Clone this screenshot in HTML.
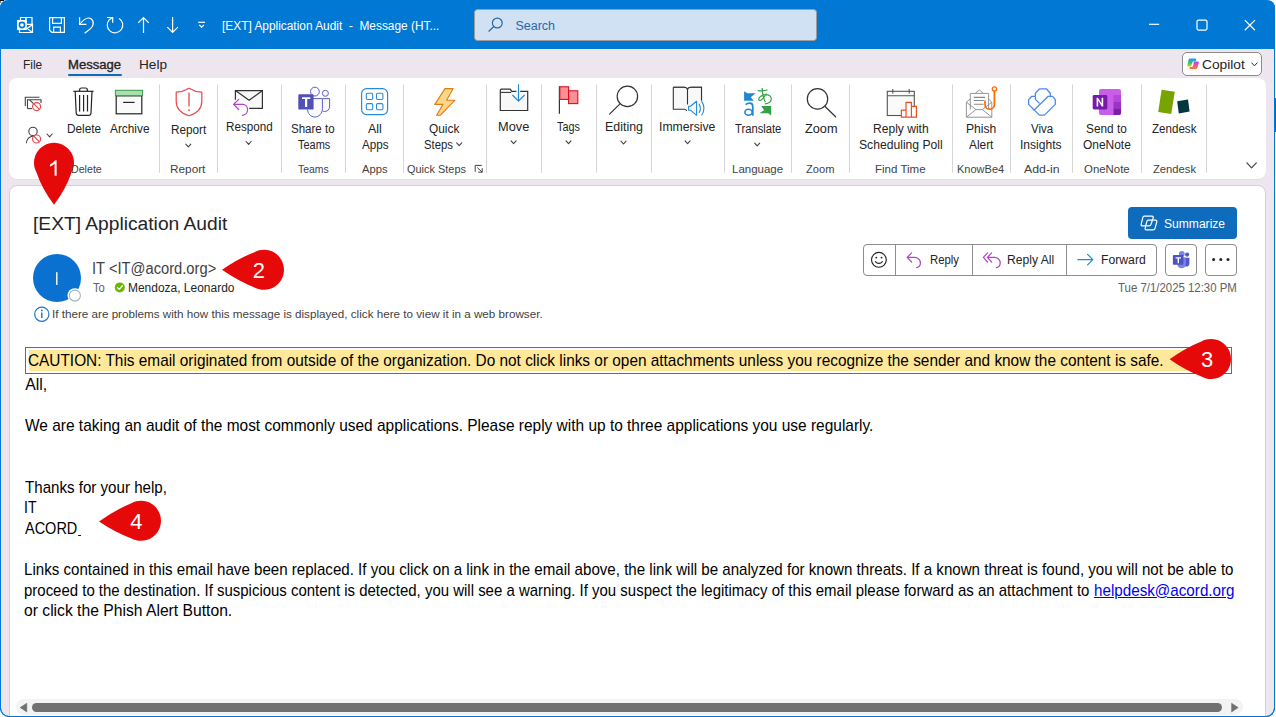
<!DOCTYPE html>
<html><head><meta charset="utf-8"><title>Outlook</title><style>
html,body{margin:0;padding:0;width:1276px;height:717px;overflow:hidden;background:#ffffff;font-family:"Liberation Sans",sans-serif}
.t{position:absolute;white-space:pre;line-height:1;transform-origin:0 0}
.a{position:absolute;box-sizing:border-box}
svg{position:absolute;overflow:visible}
</style></head><body>
<div class="a" style="left:0;top:0;width:1275px;height:717px;background:#eee6ee;border:1px solid #0078d4;border-top:none;border-radius:8px 8px 9px 9px;"></div>
<div class="a" style="left:0;top:0;width:1275px;height:49px;background:#0078d4;border-radius:8px 8px 0 0;"></div>
<!-- search -->
<div class="a" style="left:474px;top:9px;width:343px;height:32px;background:#cfe1f3;border:1px solid #9d9c9e;border-radius:3.5px;"></div>
<!-- copilot btn -->
<div class="a" style="left:1182px;top:52px;width:80px;height:24px;background:#fff;border:1px solid #8a8a8a;border-radius:5px;"></div>
<!-- ribbon card -->
<div class="a" style="left:9px;top:78px;width:1257px;height:101px;background:#fff;border-radius:8px;box-shadow:0 0.5px 0.5px rgba(0,0,0,0.06);"></div>
<!-- message card -->
<div class="a" style="left:9px;top:185px;width:1257px;height:540px;background:#fff;border:1px solid #d4d0d4;border-radius:8px 8px 0 0;"></div>
<!-- menu underline -->
<div class="a" style="left:68.3px;top:73.6px;width:53.4px;height:2.5px;background:#0f6cbd;border-radius:1.5px;"></div>
<!-- summarize -->
<div class="a" style="left:1128px;top:207px;width:109px;height:32px;background:#0f6cbd;border-radius:4px;"></div>
<!-- action buttons -->
<div class="a" style="left:863px;top:244px;width:294px;height:32px;background:#fff;border:1px solid #8d8d8d;border-radius:4px;"></div>
<div class="a" style="left:895px;top:245px;width:1px;height:30px;background:#8d8d8d;"></div>
<div class="a" style="left:972px;top:245px;width:1px;height:30px;background:#8d8d8d;"></div>
<div class="a" style="left:1066px;top:245px;width:1px;height:30px;background:#8d8d8d;"></div>
<div class="a" style="left:1165px;top:244px;width:32px;height:32px;background:#fff;border:1px solid #8d8d8d;border-radius:4px;"></div>
<div class="a" style="left:1205px;top:244px;width:32px;height:32px;background:#fff;border:1px solid #8d8d8d;border-radius:4px;"></div>
<!-- avatar -->
<div class="a" style="left:33px;top:254px;width:48px;height:48px;background:#0b71d0;border-radius:50%;"></div>
<!-- caution -->
<div class="a" style="left:25px;top:347px;width:1207px;height:27px;border:1px solid #9c6500;"></div>
<div class="a" style="left:29px;top:350px;width:1199px;height:21px;background:#ffe899;"></div>
<!-- scrollbar -->
<div class="a" style="left:16px;top:699px;width:1227px;height:16px;background:#f3f3f3;border-radius:8px;"></div>
<div class="a" style="left:32px;top:703px;width:1190px;height:9px;background:#707070;border-radius:5px;"></div>
<svg style="left:0;top:0" width="1276" height="717" viewBox="0 0 1276 717">
<g fill="none" stroke="#fff" stroke-width="1.2">
 <!-- outlook -->
 <path d="M20.5 20 V17.5 H32 V24"/>
 <path d="M25.9 17.5 V23.5" stroke-width="1.6"/>
 <path d="M19.5 30 V32.5 H32.5 V23.6 M26.6 24.3 H32 M32 25 L27.2 28.4 L31.6 32"/>
 <rect x="17" y="20" width="9.8" height="10" fill="#fff" stroke="none"/>
 <circle cx="22" cy="25" r="2.6" stroke="#0078d4" stroke-width="1.6"/>
 <!-- save -->
 <path d="M49.6 17.6 H64.4 V32.4 H51.8 L49.6 30.2 Z"/>
 <path d="M52.6 17.6 V23.4 H61.4 V17.6"/>
 <path d="M53.6 32.4 V27.2 H60.4 V32.4"/>
 <!-- undo -->
 <path d="M79.6 17.2 V24.4 H86.4"/>
 <path d="M80 24 C84 19 88 16.8 91 18.8 C94.8 21.5 93.5 26.6 89.5 29.6 L84.6 33.2"/>
 <!-- redo -->
 <path d="M119.1 18.4 A7.8 7.8 0 1 1 109.2 19.8 L112.6 17.5"/>
 <path d="M107 17.5 H112.7 V22.8"/>
 <!-- up -->
 <path d="M143.5 17.5 V33 M138.2 22.8 L143.5 17.5 L148.8 22.8"/>
 <!-- down -->
 <path d="M172.6 17 V32.5 M167.3 27.2 L172.6 32.5 L177.9 27.2"/>
 <!-- customize -->
 <path d="M198.2 22.3 H205"/>
 <path d="M199.2 24.8 L201.6 27.2 L204 24.8"/>
 <!-- window controls -->
 <path d="M1149 24.3 H1159.2"/>
 <rect x="1197" y="20.1" width="10" height="10" rx="1.5"/>
 <path d="M1244.8 20.1 L1255 30.2 M1255 20.1 L1244.8 30.2"/>
</g>
<g fill="none" stroke="#2a67a8" stroke-width="1.2">
 <circle cx="497.3" cy="23" r="4.9"/>
 <path d="M493.8 26.5 L488.6 31.5"/>
</g>
<line x1="159.5" y1="84.5" x2="159.5" y2="172.8" stroke="#d6d6d6" stroke-width="1"/><line x1="217.5" y1="84.5" x2="217.5" y2="172.8" stroke="#d6d6d6" stroke-width="1"/><line x1="281.5" y1="84.5" x2="281.5" y2="172.8" stroke="#d6d6d6" stroke-width="1"/><line x1="345.5" y1="84.5" x2="345.5" y2="172.8" stroke="#d6d6d6" stroke-width="1"/><line x1="403.5" y1="84.5" x2="403.5" y2="172.8" stroke="#d6d6d6" stroke-width="1"/><line x1="486.5" y1="84.5" x2="486.5" y2="172.8" stroke="#d6d6d6" stroke-width="1"/><line x1="541.5" y1="84.5" x2="541.5" y2="172.8" stroke="#d6d6d6" stroke-width="1"/><line x1="596.5" y1="84.5" x2="596.5" y2="172.8" stroke="#d6d6d6" stroke-width="1"/><line x1="651.5" y1="84.5" x2="651.5" y2="172.8" stroke="#d6d6d6" stroke-width="1"/><line x1="724.5" y1="84.5" x2="724.5" y2="172.8" stroke="#d6d6d6" stroke-width="1"/><line x1="791.5" y1="84.5" x2="791.5" y2="172.8" stroke="#d6d6d6" stroke-width="1"/><line x1="849.5" y1="84.5" x2="849.5" y2="172.8" stroke="#d6d6d6" stroke-width="1"/><line x1="952.5" y1="84.5" x2="952.5" y2="172.8" stroke="#d6d6d6" stroke-width="1"/><line x1="1010.5" y1="84.5" x2="1010.5" y2="172.8" stroke="#d6d6d6" stroke-width="1"/><line x1="1072.5" y1="84.5" x2="1072.5" y2="172.8" stroke="#d6d6d6" stroke-width="1"/><line x1="1141.5" y1="84.5" x2="1141.5" y2="172.8" stroke="#d6d6d6" stroke-width="1"/><line x1="1206.5" y1="84.5" x2="1206.5" y2="172.8" stroke="#d6d6d6" stroke-width="1"/>
<g fill="none" stroke="#424242" stroke-width="1.1">
 <!-- ignore -->
 <path d="M25.3 106 V97.3 H39.5"/>
 <path d="M27.5 108.6 V99.7 H41 V103"/>
 <path d="M27.5 108.6 H32"/>
 <path d="M29.5 99.9 L33.5 103.6"/>
 <!-- person block -->
 <circle cx="33" cy="131.4" r="4.2"/>
 <path d="M26.3 143.2 C26.8 139.2 29.5 136.4 33.5 136"/>
</g>
<g fill="#fff" stroke="#e5484d" stroke-width="1.2">
 <circle cx="36.6" cy="106.6" r="4"/>
 <path d="M33.8 103.8 L39.4 109.4"/>
 <circle cx="36.6" cy="139" r="4"/>
 <path d="M33.8 136.2 L39.4 141.8"/>
</g>
<path d="M47.00 134.00 L49.60 136.80 L52.20 134.00" fill="none" stroke="#424242" stroke-width="1.1" stroke-linecap="round" stroke-linejoin="round"/>
<g fill="none" stroke="#242424" stroke-width="1.2">
 <!-- trash -->
 <path d="M73.3 91.3 H93.6"/>
 <path d="M79.6 91.2 V90 C79.6 88.6 80.4 88 81.6 88 H85.4 C86.6 88 87.4 88.6 87.4 90 V91.2"/>
 <path d="M75.2 91.5 L76.2 113 C76.3 114.6 77.2 115.4 78.6 115.4 H88.6 C90 115.4 90.9 114.6 91 113 L92 91.5"/>
 <path d="M79.6 95 V111.6 M83.6 95 V111.6 M87.5 95 V111.6"/>
 <!-- archive -->
 <rect x="116.2" y="95.8" width="25.6" height="18" fill="#fafafa"/>
 <path d="M123.2 102.4 H134.6"/>
</g>
<rect x="115.4" y="90.3" width="27.2" height="5.4" fill="#a8dfb0" stroke="#3c9a48" stroke-width="1"/>
<!-- shield -->
<path d="M189 88.2 C185 90.6 180.6 92 176.2 92.2 V101.5 C176.2 108.6 181.4 113.4 189 115.8 C196.6 113.4 201.8 108.6 201.8 101.5 V92.2 C197.4 92 193 90.6 189 88.2 Z" fill="#fff" stroke="#e5484d" stroke-width="1.2"/>
<path d="M189 92.6 V106.4" stroke="#e5484d" stroke-width="1.3"/>
<circle cx="189" cy="110.2" r="0.9" fill="#e5484d"/>
<!-- envelope respond -->
<rect x="235.4" y="90.6" width="27" height="17.7" fill="#f8f8f8" stroke="none"/>
<path d="M235.4 99.8 V90.6 H262.4 V108.3 H249.2" fill="none" stroke="#333" stroke-width="1.2"/>
<path d="M235.8 90.8 L249.1 100.2 L262.2 90.8" fill="none" stroke="#333" stroke-width="1.2"/>
<path d="M238.7 99.3 L233.6 104.4 L238.7 109.5 M233.8 104.4 H242.6 C245.6 104.4 247.6 106.8 247.6 109.8 C247.6 112.8 245.4 115.2 242.4 115.4" fill="none" stroke="#b146c2" stroke-width="1.2" stroke-linecap="round" stroke-linejoin="round"/>
<path d="M185.80 144.10 L188.30 146.90 L190.80 144.10" fill="none" stroke="#424242" stroke-width="1.1" stroke-linecap="round" stroke-linejoin="round"/><path d="M246.10 141.50 L248.60 144.30 L251.10 141.50" fill="none" stroke="#424242" stroke-width="1.1" stroke-linecap="round" stroke-linejoin="round"/><path d="M456.70 142.95 L459.20 145.65 L461.70 142.95" fill="none" stroke="#424242" stroke-width="1.1" stroke-linecap="round" stroke-linejoin="round"/><path d="M511.10 140.90 L513.60 143.70 L516.10 140.90" fill="none" stroke="#424242" stroke-width="1.1" stroke-linecap="round" stroke-linejoin="round"/><path d="M566.00 140.90 L568.50 143.70 L571.00 140.90" fill="none" stroke="#424242" stroke-width="1.1" stroke-linecap="round" stroke-linejoin="round"/><path d="M621.00 141.20 L623.50 144.00 L626.00 141.20" fill="none" stroke="#424242" stroke-width="1.1" stroke-linecap="round" stroke-linejoin="round"/><path d="M685.10 140.90 L687.60 143.70 L690.10 140.90" fill="none" stroke="#424242" stroke-width="1.1" stroke-linecap="round" stroke-linejoin="round"/><path d="M754.70 143.10 L757.20 145.90 L759.70 143.10" fill="none" stroke="#424242" stroke-width="1.1" stroke-linecap="round" stroke-linejoin="round"/>
<!-- teams -->
<g stroke="#5b5fc7" stroke-width="1" fill="#fafafa">
 <path d="M322.6 98.6 H329.6 V106.2 C329.6 109.4 327.6 111.5 324.8 111.5 C323.6 111.5 322.8 111.2 322.4 110.9"/>
 <circle cx="325.4" cy="93.3" r="3"/>
 <path d="M310 98.6 H322.4 V108.8 C322.4 113.4 319 117 314.9 117 C310.8 117 307.6 113.6 307.6 109.6"/>
 <circle cx="314.9" cy="91.6" r="4.4"/>
</g>
<rect x="298.3" y="94.3" width="15.3" height="15.3" rx="1.2" fill="#4f52b2"/>
<path d="M302 97.3 H310.3 V99.1 H307.2 V107 H305 V99.1 H302 Z" fill="#fff"/>
<!-- all apps -->
<rect x="361.6" y="88.6" width="26" height="26" rx="5" fill="none" stroke="#2b8ad6" stroke-width="1.2"/>
<g fill="none" stroke="#2b8ad6" stroke-width="1.1">
 <rect x="366.3" y="93.3" width="6.4" height="6.2" rx="1.2"/>
 <rect x="376.5" y="93.3" width="6.4" height="6.2" rx="1.2"/>
 <rect x="366.3" y="103.6" width="6.4" height="6.2" rx="1.2"/>
 <rect x="376.5" y="103.6" width="6.4" height="6.2" rx="1.2"/>
</g>
<!-- lightning -->
<path d="M445 88.6 L453.2 88.6 L446.6 100.2 L455 100.2 L440.4 115.2 L436.6 115.2 L443 104.4 L434.8 104.4 Z" fill="#f9d88a" stroke="#e07b10" stroke-width="1.1" stroke-linejoin="round"/>
<!-- move -->
<rect x="500.3" y="91.4" width="27.4" height="19.1" fill="#f8f8f8"/>
<path d="M516.4 91.4 H511.8 L510.2 89.2 H501.3 C500.7 89.2 500.3 89.6 500.3 90.2 V110.5 H527.7 V91.4 H520.2" fill="none" stroke="#333" stroke-width="1.2"/>
<path d="M500.3 92.4 H511.2" fill="none" stroke="#333" stroke-width="1.1"/>
<path d="M518.5 84.2 V101.2 M512.4 95 L518.5 101.2 L524.6 95" fill="none" stroke="#1e8ad6" stroke-width="1.2" stroke-linejoin="round"/>
<!-- flag -->
<path d="M559.4 86.3 V113.7" stroke="#333" stroke-width="1.2"/>
<rect x="559.8" y="86.8" width="8.8" height="12.6" fill="#ff8f96" stroke="#d0131d" stroke-width="1.1"/>
<rect x="568.6" y="90.8" width="9.2" height="12.8" fill="#ff8f96" stroke="#d0131d" stroke-width="1.1"/>

<!-- editing magnifier -->
<circle cx="627.4" cy="96.4" r="10.2" fill="none" stroke="#333" stroke-width="1.2"/>
<path d="M620.2 103.6 L609.6 114.2" stroke="#333" stroke-width="1.2" stroke-linecap="round"/>
<!-- immersive -->
<path d="M673.3 87.3 H684.2 C685.8 87.3 687 88 687.5 89.6 C688 88 689.2 87.3 690.8 87.3 H701.5 V100.4" fill="none" stroke="#333" stroke-width="1.1"/>
<rect x="673.8" y="87.8" width="27.2" height="21" fill="#f8f8f8"/>
<path d="M673.3 87.3 H684.2 C685.8 87.3 687 88 687.5 89.6 C688 88 689.2 87.3 690.8 87.3 H701.5 V100.4 M673.3 87.3 V109.3 H684.4 C685.4 109.3 686.2 109.8 686.8 110.9 M687.5 89.6 V104.5" fill="none" stroke="#333" stroke-width="1.1"/>
<path d="M688.6 106.3 H690.5 L696.6 101.3 V115.3 L690.5 110.2 H688.6 Z" fill="#fafafa" stroke="#1e8ad6" stroke-width="1.1" stroke-linejoin="round"/>
<path d="M699.2 104.2 C700.6 106.6 700.6 110 699.2 112.4 M701.8 101.6 C704.4 105.6 704.4 111 701.8 115" fill="none" stroke="#1e8ad6" stroke-width="1.1" stroke-linecap="round"/>
<!-- translate -->
<path d="M744.1 91.2 L747.4 93.3 H755.6 L750.8 97.3 L753.8 100.8 H744.1 Z" fill="#1e87d4"/>
<path d="M745.6 104.6 C746.8 103.6 748.4 103.2 749.8 103.2 C751.8 103.2 752.8 104.4 752.8 106.6 V115.8" fill="none" stroke="#1e87d4" stroke-width="1.7"/>
<ellipse cx="748.5" cy="112.2" rx="3.6" ry="3" fill="none" stroke="#1e87d4" stroke-width="1.6"/>
<path d="M758.2 90.6 C761.5 91.2 765 90.6 767.2 90 M762.2 88.4 C762.4 92.6 763.4 98.6 765.2 101.8 M766.2 94 C763.6 98.2 760.4 101.4 759 100.2 C757.6 98.8 760.8 94.6 765.8 94.6 C769.4 94.6 771.4 96.6 771.2 99.2 C771 101.8 768.4 103.4 765.2 103.8" fill="none" stroke="#34a044" stroke-width="1.2" stroke-linecap="round"/>
<path d="M771.2 106.1 V115.6 L768.2 113.3 H759.4 L764.2 110.2 L761.2 106.1 Z" fill="#34a044"/>
<!-- zoom magnifier -->
<circle cx="817.5" cy="98.9" r="10.2" fill="none" stroke="#333" stroke-width="1.2"/>
<path d="M824.8 106.2 L835.6 116.8" stroke="#333" stroke-width="1.2" stroke-linecap="round"/>
<!-- calendar poll -->
<rect x="887.3" y="91.3" width="27" height="24.2" fill="#fafafa" stroke="#555" stroke-width="1.1"/>
<path d="M887.3 95.8 H914.3 M892.8 89 V93.4 M909.2 89 V93.4" fill="none" stroke="#555" stroke-width="1.1"/>
<path d="M901.4 117.2 V110.2 H906 V102.3 H911.4 V106.3 H916.4 V117.2 Z M906 110.2 V117.2 M911.4 106.3 V117.2" fill="#fff" stroke="#e8501c" stroke-width="1.2"/>
<!-- phish alert -->
<g fill="none" stroke="#8a8a8a" stroke-width="0.9">
 <path d="M966.4 102.2 V117.2 H991.8 V102.2 L988.6 99 M966.4 102.2 L970.2 99"/>
 <path d="M966.6 117 L975.9 109.6 H982.3 L991.6 117 M966.4 102.2 L975.9 109.6 M991.8 102.2 L982.3 109.6"/>
 <path d="M970.3 109.4 V93.4 H988.6 V109.4 M975.3 93.4 L979.3 89.9 L983.3 93.4"/>
 <path d="M973.8 97.4 H985.2 M973.8 100.5 H983.8 M973.8 104.3 H983.6" stroke-width="1.1"/>
</g>
<path d="M994.4 91 V104.4 C994.4 107.4 992.2 109.2 989.6 109.2 C986.8 109.2 985 107 985 104.4 V100.6" fill="none" stroke="#ff6a00" stroke-width="1.7"/>
<circle cx="994.4" cy="88.9" r="2.1" fill="#fff" stroke="#ff6a00" stroke-width="1.3"/>
<!-- viva -->
<g fill="none" stroke="#4a8af5" stroke-width="1.3" stroke-linejoin="round">
 <path d="M1035.4 96.3 V93.2 L1039.6 88.8 H1046.3 L1050.3 93.2 V96.3"/>
 <path d="M1035.4 96.3 H1031.8 L1028.6 99.6 V104.4 L1039.4 115.1 H1044.5 L1055.3 104.4 V99.6 L1052.6 96.3 H1048.2 L1034.4 109.8 H1032.6"/>
 <path d="M1035.4 96.3 L1035.6 99.6 L1039.6 103.4"/>
</g>
<!-- onenote -->
<rect x="1099" y="89" width="22" height="26" rx="2" fill="#c95ee8"/>
<rect x="1113.5" y="95" width="7.5" height="6.8" fill="#b548d8"/>
<rect x="1113.5" y="101.8" width="7.5" height="6.8" fill="#9b34c4"/>
<path d="M1113.5 108.6 H1121 V113 A2 2 0 0 1 1119 115 H1113.5 Z" fill="#7c1fa8"/>
<rect x="1092.7" y="94.9" width="14.6" height="14.5" rx="1.4" fill="#7719aa"/>
<path d="M1096.6 106.4 V97.8 H1098 L1101.6 103.6 V97.8 H1103.2 V106.4 H1101.8 L1098.2 100.6 V106.4 Z" fill="#fff"/>
<!-- zendesk -->
<path d="M1161.6 89.8 L1174.8 91.8 L1171.2 114 L1158.2 112 Z" fill="#78a300"/>
<path d="M1177.2 101.2 L1188 99.4 L1189.6 111.6 L1178.8 113.4 Z" fill="#03363d"/>
<!-- quick steps launcher -->
<path d="M475.2 171.8 V165.4 H481.8" fill="none" stroke="#424242" stroke-width="1"/>
<path d="M477.4 167.6 L482.2 172.2 M482.2 168.2 V172.2 H478.2" fill="none" stroke="#424242" stroke-width="1"/>
<path d="M1246.90 162.90 L1251.60 167.90 L1256.30 162.90" fill="none" stroke="#424242" stroke-width="1.2" stroke-linecap="round" stroke-linejoin="round"/>
<!-- green check -->
<circle cx="119.8" cy="287.4" r="5" fill="#6bb700"/>
<path d="M117.4 287.6 L119.2 289.4 L122.4 285.8" fill="none" stroke="#fff" stroke-width="1.3" stroke-linecap="round" stroke-linejoin="round"/>
<!-- info -->
<circle cx="41.8" cy="314.2" r="7.1" fill="none" stroke="#1c74c4" stroke-width="1.2"/>
<path d="M41.8 312.6 V318" stroke="#1c74c4" stroke-width="1.4"/>
<circle cx="41.8" cy="310.4" r="0.9" fill="#1c74c4"/>
<!-- summarize icon -->
<g fill="none" stroke="#fff" stroke-width="1.2" stroke-linejoin="round">
 <path d="M1144.2 216.2 H1152 Q1153.6 216.2 1153.2 217.8 L1151 224.4 Q1150.6 225.8 1149 225.8 H1142.2 Q1140.8 225.8 1141.2 224.2 L1142.8 217.6 Q1143.2 216.2 1144.2 216.2 Z"/>
 <path d="M1148 220.2 H1155.6 Q1157.2 220.2 1156.8 221.8 L1155 228.4 Q1154.6 229.8 1153 229.8 H1146.2 Q1144.8 229.8 1145.2 228.2 L1146.8 221.6 Q1147.2 220.2 1148 220.2 Z"/>
</g>
<!-- emoji -->
<circle cx="878.9" cy="259.8" r="7.4" fill="none" stroke="#242424" stroke-width="1.1"/>
<circle cx="876.3" cy="257.6" r="0.95" fill="#242424"/>
<circle cx="881.5" cy="257.6" r="0.95" fill="#242424"/>
<path d="M875.4 261.6 C877.2 264 880.6 264 882.4 261.6" fill="none" stroke="#242424" stroke-width="1.1" stroke-linecap="round"/>
<!-- reply -->
<path d="M911.6 252.8 L907.2 257.4 L911.6 262 M907.6 257.4 H914.6 C917.8 257.4 920.4 259.8 920.4 263 C920.4 265.6 918.6 267.2 916.6 267.6" fill="none" stroke="#b146c2" stroke-width="1.2" stroke-linecap="round" stroke-linejoin="round"/>
<!-- reply all -->
<path d="M987.6 252.8 L983.4 257.4 L987.6 262 M991.6 252.8 L987.4 257.4 L991.6 262 M987.8 257.4 H994.4 C997.6 257.4 1000.2 259.8 1000.2 263 C1000.2 265.6 998.4 267.2 996.4 267.6" fill="none" stroke="#b146c2" stroke-width="1.2" stroke-linecap="round" stroke-linejoin="round"/>
<!-- forward -->
<path d="M1077.8 259.6 H1092.6 M1087.6 254.4 L1092.8 259.6 L1087.6 264.8" fill="none" stroke="#1e8ad6" stroke-width="1.2" stroke-linecap="round" stroke-linejoin="round"/>
<!-- teams small -->
<circle cx="1187.1" cy="254.6" r="2.1" fill="#5059c9"/>
<path d="M1183.4 257.8 H1189.4 V263.4 C1189.4 265.4 1188 266.6 1186.4 266.6 C1184.8 266.6 1183.4 265.4 1183.4 263.4 Z" fill="#5059c9"/>
<circle cx="1181.8" cy="253.8" r="2.9" fill="#7b83eb"/>
<path d="M1177.4 257.6 H1185.8 V264.4 C1185.8 266.8 1183.9 268.2 1181.6 268.2 C1179.3 268.2 1177.4 266.8 1177.4 264.4 Z" fill="#7b83eb"/>
<rect x="1172.9" y="255" width="10.6" height="9.8" rx="0.8" fill="#4b53bc"/>
<path d="M1175.6 257.2 H1181 V258.6 H1179 V263.2 H1177.6 V258.6 H1175.6 Z" fill="#fff"/>
<!-- more dots -->
<circle cx="1213.6" cy="259.6" r="1.5" fill="#242424"/>
<circle cx="1220.8" cy="259.6" r="1.5" fill="#242424"/>
<circle cx="1228" cy="259.6" r="1.5" fill="#242424"/>
<!-- copilot -->
<defs>
 <linearGradient id="cpg1" x1="0" y1="0" x2="0" y2="1"><stop offset="0" stop-color="#1a9cf0"/><stop offset="0.55" stop-color="#3cc070"/><stop offset="1" stop-color="#e8d010"/></linearGradient>
 <linearGradient id="cpg2" x1="0" y1="0" x2="0" y2="1"><stop offset="0" stop-color="#a050f0"/><stop offset="0.5" stop-color="#f04ea0"/><stop offset="1" stop-color="#ff7a30"/></linearGradient>
</defs>
<path d="M1189.6 58.6 H1195.2 Q1196.6 58.6 1196.2 60 L1195.9 61.2 H1194 Q1192.8 61.2 1192.4 62.4 L1191 66.6 H1188.2 Q1187 66.6 1187.3 65.4 L1188.6 59.8 Q1188.9 58.6 1189.6 58.6 Z" fill="url(#cpg1)"/>
<path d="M1193.8 61.6 H1197.8 Q1199.2 61.6 1198.8 63 L1197.4 67.8 Q1197 69 1195.8 69 H1190.2 Q1189 69 1189.4 67.8 L1189.8 66.9 H1191.8 Q1192.8 66.9 1193.2 65.8 Z" fill="url(#cpg2)"/>
<path d="M1251.70 62.95 L1254.40 65.85 L1257.10 62.95" fill="none" stroke="#242424" stroke-width="1.0" stroke-linecap="round" stroke-linejoin="round"/><path d="M54.00 204.80 Q65.79 189.36 71.59 172.32 A20 20 0 1 0 36.41 172.32 Q42.21 189.36 54.00 204.80 Z" fill="#e60909"/><path d="M222.00 269.80 Q239.04 258.01 254.48 252.21 A20 20 0 1 1 254.48 287.39 Q239.04 281.59 222.00 269.80 Z" fill="#e60909"/><path d="M1169.60 359.30 Q1186.27 347.39 1201.34 341.49 A20 20 0 1 1 1201.34 376.51 Q1186.27 370.91 1169.60 359.30 Z" fill="#e60909"/><path d="M99.00 521.50 Q116.04 509.36 131.48 503.21 A20 20 0 1 1 131.48 538.39 Q116.04 532.94 99.00 521.50 Z" fill="#e60909"/>
<path d="M20.2 707.6 L26.8 703.2 V712 Z" fill="#707070" stroke="#707070" stroke-width="0.6" stroke-linejoin="round"/>
<path d="M1238.2 707.6 L1231.6 703.2 V712 Z" fill="#707070" stroke="#707070" stroke-width="0.6" stroke-linejoin="round"/>
<rect x="78" y="535" width="3" height="1" fill="#0000ee"/>
<path d="M50 164.4 C52.4 163.2 54 161.8 55 160.2 H56.6 V175.8 H54.6 V163.4 C53.6 164.6 51.8 165.8 50 166.6 Z" fill="#fff"/><rect x="56.1" y="272.2" width="1.4" height="12.7" fill="#fff"/><circle cx="74.9" cy="295.6" r="7.4" fill="#fff"/><circle cx="74.9" cy="295.6" r="5.5" fill="#fff" stroke="#9fb6bf" stroke-width="1.1"/></svg>
<!-- window border overlay -->
<div class="a" style="left:0;top:49px;width:1275px;height:668px;border:1px solid #0078d4;border-top:none;border-radius:0 0 9px 9px;"></div>
<div class="t" style="left:222.01px;top:20.00px;font-size:12px;color:#ffffff;font-weight:400;transform:scaleX(0.9908);">[EXT] Application Audit  -  Message (HT...</div>
<div class="t" style="left:515.40px;top:20.00px;font-size:12.5px;color:#2a67a8;font-weight:400;transform:scaleX(1.0000);">Search</div>
<div class="t" style="left:22.51px;top:59.00px;font-size:12px;color:#242424;font-weight:400;transform:scaleX(0.9889);">File</div>
<div class="t" style="left:67.61px;top:59.00px;font-size:12px;color:#242424;font-weight:400;transform:scaleX(1.0896);-webkit-text-stroke:0.35px #242424;">Message</div>
<div class="t" style="left:139.27px;top:59.00px;font-size:12px;color:#242424;font-weight:400;transform:scaleX(1.1348);">Help</div>
<div class="t" style="left:1202.45px;top:59.00px;font-size:12px;color:#242424;font-weight:400;transform:scaleX(1.1472);">Copilot</div>
<div class="t" style="left:66.82px;top:123.00px;font-size:12px;color:#242424;font-weight:400;transform:scaleX(0.9818);">Delete</div>
<div class="t" style="left:109.50px;top:123.00px;font-size:12px;color:#242424;font-weight:400;transform:scaleX(0.9875);">Archive</div>
<div class="t" style="left:170.62px;top:124.00px;font-size:12px;color:#242424;font-weight:400;transform:scaleX(0.9800);">Report</div>
<div class="t" style="left:735.30px;top:123.00px;font-size:12px;color:#242424;font-weight:400;transform:scaleX(0.9347);">Translate</div>
<div class="t" style="left:804.60px;top:123.00px;font-size:12px;color:#242424;font-weight:400;transform:scaleX(1.0600);">Zoom</div>
<div class="t" style="left:1151.80px;top:123.00px;font-size:12px;color:#242424;font-weight:400;transform:scaleX(0.9652);">Zendesk</div>
<div class="t" style="left:225.73px;top:121.00px;font-size:12px;color:#242424;font-weight:400;transform:scaleX(0.9717);">Respond</div>
<div class="t" style="left:498.24px;top:121.00px;font-size:12px;color:#242424;font-weight:400;transform:scaleX(1.0643);">Move</div>
<div class="t" style="left:557.40px;top:121.00px;font-size:12px;color:#242424;font-weight:400;transform:scaleX(0.9000);">Tags</div>
<div class="t" style="left:604.57px;top:121.00px;font-size:12px;color:#242424;font-weight:400;transform:scaleX(1.0343);">Editing</div>
<div class="t" style="left:658.98px;top:121.00px;font-size:12px;color:#242424;font-weight:400;transform:scaleX(1.0185);">Immersive</div>
<div class="t" style="left:291.24px;top:123.00px;font-size:12px;color:#242424;font-weight:400;transform:scaleX(0.9614);">Share to</div>
<div class="t" style="left:297.70px;top:139.00px;font-size:12px;color:#242424;font-weight:400;transform:scaleX(0.9143);">Teams</div>
<div class="t" style="left:368.30px;top:123.00px;font-size:12px;color:#242424;font-weight:400;transform:scaleX(1.0385);">All</div>
<div class="t" style="left:361.50px;top:139.00px;font-size:12px;color:#242424;font-weight:400;transform:scaleX(0.9741);">Apps</div>
<div class="t" style="left:429.20px;top:123.00px;font-size:12px;color:#242424;font-weight:400;transform:scaleX(0.9903);">Quick</div>
<div class="t" style="left:424.26px;top:139.00px;font-size:12px;color:#242424;font-weight:400;transform:scaleX(0.9414);">Steps</div>
<div class="t" style="left:873.29px;top:123.00px;font-size:12px;color:#242424;font-weight:400;transform:scaleX(1.0056);">Reply with</div>
<div class="t" style="left:858.99px;top:139.00px;font-size:12px;color:#242424;font-weight:400;transform:scaleX(1.0123);">Scheduling Poll</div>
<div class="t" style="left:966.39px;top:123.00px;font-size:12px;color:#242424;font-weight:400;transform:scaleX(1.0107);">Phish</div>
<div class="t" style="left:969.00px;top:139.00px;font-size:12px;color:#242424;font-weight:400;transform:scaleX(0.9880);">Alert</div>
<div class="t" style="left:1031.00px;top:123.00px;font-size:12px;color:#242424;font-weight:400;transform:scaleX(0.9565);">Viva</div>
<div class="t" style="left:1020.20px;top:139.00px;font-size:12px;color:#242424;font-weight:400;transform:scaleX(1.0050);">Insights</div>
<div class="t" style="left:1086.02px;top:123.00px;font-size:12px;color:#242424;font-weight:400;transform:scaleX(0.9850);">Send to</div>
<div class="t" style="left:1083.30px;top:139.00px;font-size:12px;color:#242424;font-weight:400;transform:scaleX(0.9958);">OneNote</div>
<div class="t" style="left:71.33px;top:164.00px;font-size:11px;color:#424242;font-weight:400;transform:scaleX(0.9677);">Delete</div>
<div class="t" style="left:170.23px;top:164.00px;font-size:11px;color:#424242;font-weight:400;transform:scaleX(1.0719);">Report</div>
<div class="t" style="left:298.00px;top:164.00px;font-size:11px;color:#424242;font-weight:400;transform:scaleX(0.9469);">Teams</div>
<div class="t" style="left:362.20px;top:164.00px;font-size:11px;color:#424242;font-weight:400;transform:scaleX(1.0200);">Apps</div>
<div class="t" style="left:407.30px;top:164.00px;font-size:11px;color:#424242;font-weight:400;transform:scaleX(0.9949);">Quick Steps</div>
<div class="t" style="left:732.26px;top:164.00px;font-size:11px;color:#424242;font-weight:400;transform:scaleX(1.0438);">Language</div>
<div class="t" style="left:806.00px;top:164.00px;font-size:11px;color:#424242;font-weight:400;transform:scaleX(1.0107);">Zoom</div>
<div class="t" style="left:875.05px;top:164.00px;font-size:11px;color:#424242;font-weight:400;transform:scaleX(1.0468);">Find Time</div>
<div class="t" style="left:957.40px;top:164.00px;font-size:11px;color:#424242;font-weight:400;transform:scaleX(1.0022);">KnowBe4</div>
<div class="t" style="left:1023.70px;top:164.00px;font-size:11px;color:#424242;font-weight:400;transform:scaleX(1.1194);">Add-in</div>
<div class="t" style="left:1084.30px;top:164.00px;font-size:11px;color:#424242;font-weight:400;transform:scaleX(1.0386);">OneNote</div>
<div class="t" style="left:1152.60px;top:164.00px;font-size:11px;color:#424242;font-weight:400;transform:scaleX(1.0190);">Zendesk</div>
<div class="t" style="left:32.83px;top:215.00px;font-size:18px;color:#242424;font-weight:400;transform:scaleX(1.0669);">[EXT] Application Audit</div>
<div class="t" style="left:91.88px;top:261.00px;font-size:16px;color:#424242;font-weight:400;transform:scaleX(0.9194);">IT &lt;IT@acord.org&gt;</div>
<div class="t" style="left:92.80px;top:282.00px;font-size:12px;color:#616161;font-weight:400;transform:scaleX(0.9333);">To</div>
<div class="t" style="left:128.00px;top:282.00px;font-size:12px;color:#242424;font-weight:400;transform:scaleX(0.9971);">Mendoza, Leonardo</div>
<div class="t" style="left:52.44px;top:309.00px;font-size:11px;color:#424242;font-weight:400;transform:scaleX(1.0601);">If there are problems with how this message is displayed, click here to view it in a web browser.</div>
<div class="t" style="left:1163.99px;top:218.00px;font-size:12px;color:#ffffff;font-weight:400;transform:scaleX(1.0068);">Summarize</div>
<div class="t" style="left:930.25px;top:254.00px;font-size:12px;color:#242424;font-weight:400;transform:scaleX(0.9467);">Reply</div>
<div class="t" style="left:1006.99px;top:254.00px;font-size:12px;color:#242424;font-weight:400;transform:scaleX(1.0111);">Reply All</div>
<div class="t" style="left:1100.98px;top:254.00px;font-size:12px;color:#242424;font-weight:400;transform:scaleX(1.0167);">Forward</div>
<div class="t" style="left:1118.40px;top:282.00px;font-size:12px;color:#616161;font-weight:400;transform:scaleX(0.9508);">Tue 7/1/2025 12:30 PM</div>
<div class="t" style="left:28.02px;top:353.00px;font-size:15.75px;color:#000000;font-weight:400;transform:scaleX(0.9763);">CAUTION: This email originated from outside of the organization. Do not click links or open attachments unless you recognize the sender and know the content is safe.</div>
<div class="t" style="left:25.25px;top:377.00px;font-size:15.75px;color:#000000;font-weight:400;transform:scaleX(1.0000);">All,</div>
<div class="t" style="left:25.25px;top:418.00px;font-size:15.75px;color:#000000;font-weight:400;transform:scaleX(0.9815);">We are taking an audit of the most commonly used applications. Please reply with up to three applications you use regularly.</div>
<div class="t" style="left:25.25px;top:480.00px;font-size:15.75px;color:#000000;font-weight:400;transform:scaleX(0.9592);">Thanks for your help,</div>
<div class="t" style="left:24.36px;top:500.00px;font-size:15.75px;color:#000000;font-weight:400;transform:scaleX(0.8923);">IT</div>
<div class="t" style="left:25.25px;top:521.00px;font-size:15.75px;color:#000000;font-weight:400;transform:scaleX(0.9196);">ACORD</div>
<div class="t" style="left:24.29px;top:562.00px;font-size:15.75px;color:#000000;font-weight:400;transform:scaleX(0.9587);">Links contained in this email have been replaced. If you click on a link in the email above, the link will be analyzed for known threats. If a known threat is found, you will not be able to</div>
<div class="t" style="left:24.30px;top:583.00px;font-size:15.75px;color:#000000;font-weight:400;transform:scaleX(0.9500);">proceed to the destination. If suspicious content is detected, you will see a warning. If you suspect the legitimacy of this email please forward as an attachment to</div>
<div class="t" style="left:1094.00px;top:583.00px;font-size:15.75px;color:#0000ee;font-weight:400;transform:scaleX(0.9655);text-decoration:underline;">helpdesk@acord.org</div>
<div class="t" style="left:24.25px;top:603.00px;font-size:15.75px;color:#000000;font-weight:400;transform:scaleX(0.9952);">or click the Phish Alert Button.</div>
<div class="t" style="left:252.70px;top:260.00px;font-size:22px;color:#ffffff;font-weight:400;transform:scaleX(1.0000);">2</div>
<div class="t" style="left:1201.00px;top:349.00px;font-size:22px;color:#ffffff;font-weight:400;transform:scaleX(1.0000);">3</div>
<div class="t" style="left:130.20px;top:511.00px;font-size:22px;color:#ffffff;font-weight:400;transform:scaleX(1.0000);">4</div>
<div class="a" style="left:0;top:0;width:4px;height:1px;background:#111;"></div><div class="a" style="left:0;top:1px;width:1px;height:2px;background:#777;"></div><div class="a" style="left:1275px;top:98px;width:1px;height:34px;background:#1a5fb0;"></div>
</body></html>
